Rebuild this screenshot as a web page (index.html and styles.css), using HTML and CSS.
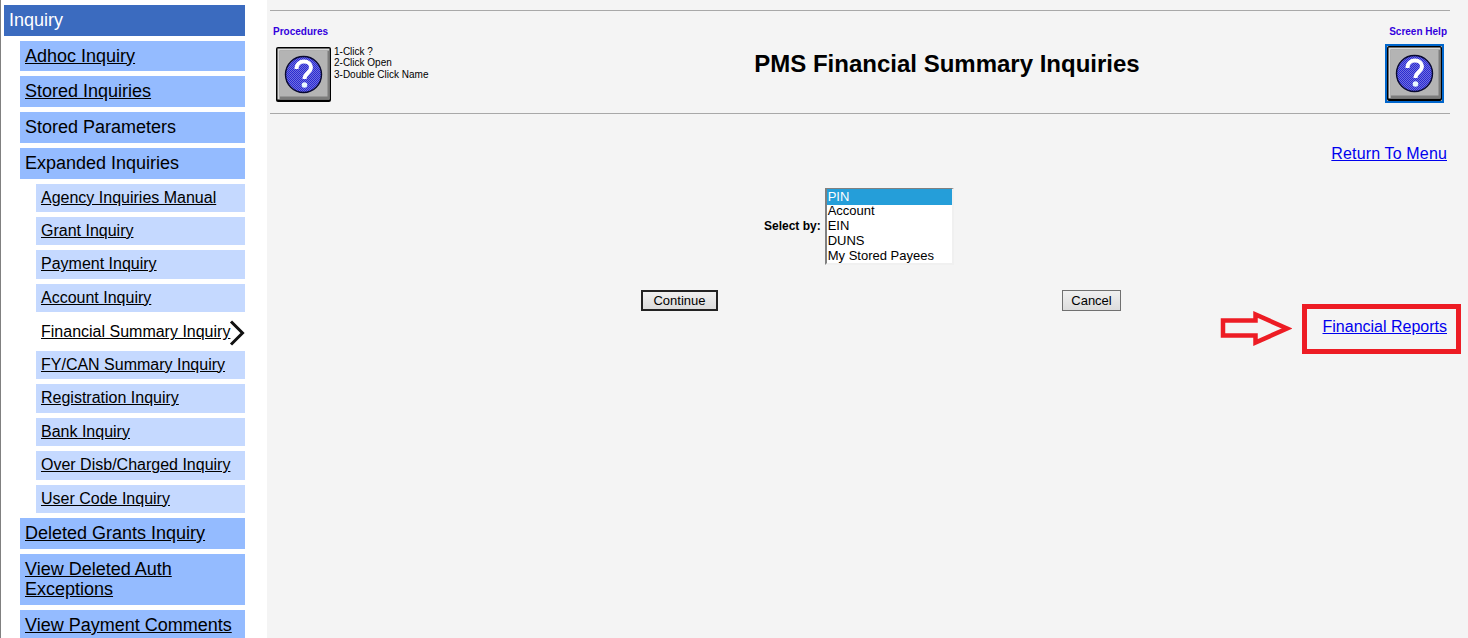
FILE: index.html
```html
<!DOCTYPE html>
<html lang="en">
<head>
<meta charset="utf-8">
<title>PMS Financial Summary Inquiries</title>
<link rel="stylesheet" href="styles.css">
</head>
<body>
<svg class="defs" width="0" height="0" aria-hidden="true">
  <defs>
    <pattern id="dither" width="2" height="2" patternUnits="userSpaceOnUse">
      <rect width="2" height="2" fill="#2a2ad0"/>
      <rect width="1" height="1" fill="#6f6fe0"/>
      <rect x="1" y="1" width="1" height="1" fill="#6f6fe0"/>
    </pattern>
    <symbol id="help" viewBox="0 0 55 55">
      <rect width="55" height="55" rx="2" fill="#000"/>
      <rect x="1.5" y="1.5" width="52" height="51" fill="#d8d8d8"/>
      <rect x="3.5" y="3.5" width="50" height="49" fill="#7c7c7c"/>
      <rect x="3.5" y="3.5" width="48" height="46" fill="#b4b4b4"/>
      <circle cx="27.5" cy="27.5" r="18" fill="url(#dither)" stroke="#0a0a30" stroke-width="1.4"/>
      <path d="M20.5 22C20.5 17 24 14.5 28 14.5C32 14.5 35 17 35 20.5C35 25.5 28.5 26 28.5 32" fill="none" stroke="#fff" stroke-width="4"/>
      <circle cx="28.5" cy="38" r="2.8" fill="#e8f8ff"/>
    </symbol>
  </defs>
</svg>
<div class="page">
  <nav class="side">
    <div class="top">Inquiry</div>
    <a class="m" href="#">Adhoc Inquiry</a>
    <a class="m" href="#">Stored Inquiries</a>
    <div class="m">Stored Parameters</div>
    <div class="m">Expanded Inquiries</div>
    <a class="s" href="#">Agency Inquiries Manual</a>
    <a class="s" href="#">Grant Inquiry</a>
    <a class="s" href="#">Payment Inquiry</a>
    <a class="s" href="#">Account Inquiry</a>
    <div class="s current"><a href="#">Financial Summary Inquiry</a><svg class="chev" width="16" height="26" viewBox="0 0 16 26"><path d="M2 1.5L13.5 13L2 24.5" fill="none" stroke="#111" stroke-width="3"/></svg></div>
    <a class="s" href="#">FY/CAN Summary Inquiry</a>
    <a class="s" href="#">Registration Inquiry</a>
    <a class="s" href="#">Bank Inquiry</a>
    <a class="s" href="#">Over Disb/Charged Inquiry</a>
    <a class="s" href="#">User Code Inquiry</a>
    <a class="m" href="#">Deleted Grants Inquiry</a>
    <a class="m" href="#">View Deleted Auth Exceptions</a>
    <a class="m" href="#">View Payment Comments</a>
  </nav>
  <main class="main">
    <header class="head">
      <div class="proc">
        <div class="tiny">Procedures</div>
        <div class="proc-row">
          <svg class="help" width="55" height="55"><use href="#help"/></svg>
          <div class="steps">1-Click ?<br>2-Click Open<br>3-Double Click Name</div>
        </div>
      </div>
      <h1>PMS Financial Summary Inquiries</h1>
      <div class="shelp">
        <div class="tiny">Screen Help</div>
        <span class="focus"><svg class="help" width="55" height="55"><use href="#help"/></svg></span>
      </div>
    </header>
    <div class="ret"><a href="#">Return To Menu</a></div>
    <div class="sel">
      <label class="sel-label">Select by:</label>
      <ul class="list">
        <li class="on">PIN</li>
        <li>Account</li>
        <li>EIN</li>
        <li>DUNS</li>
        <li>My Stored Payees</li>
      </ul>
    </div>
    <div class="btns">
      <button class="btn def" type="button">Continue</button>
      <button class="btn cancel" type="button">Cancel</button>
    </div>
    <div class="fin"><a href="#">Financial Reports</a></div>
    <div class="redbox"></div>
    <svg class="arrow" width="72" height="35" viewBox="0 0 72 35"><path d="M3 9.5H35.5V3.5L67 17.5L35.5 31.5V24.5H3Z" fill="none" stroke="#ed1c24" stroke-width="4.5"/></svg>
  </main>
</div>
</body>
</html>
```
FILE: styles.css
```css
html, body { margin: 0; padding: 0; height: 100%; overflow: hidden; background: #fff; }
body { font-family: "Liberation Sans", Arial, sans-serif; color: #000; }
.defs { position: absolute; }
.page { display: flex; height: 638px; border-left: 1px solid #808080; }
.side { width: 241px; flex: none; padding: 5px 22px 0 3px; display: flex; flex-direction: column; }
.top, .m, .s { display: block; color: #000; box-sizing: border-box; flex: none; }
.top { background: #3b6bbf; color: #fff; font-size: 18px; line-height: 20.7px; padding: 5px; margin-bottom: 5px; }
.m { background: #94bbff; font-size: 18px; line-height: 20.7px; padding: 5px; margin: 0 0 5px 16px; }
.s { background: #c5d9ff; font-size: 16px; line-height: 18.45px; padding: 5px; margin: 0 0 5px 32px; }
.current { background: #fff; display: flex; align-items: center; height: 33.4px; margin-bottom: 0; padding: 0 0 3px 5px; white-space: nowrap; }
.current a { color: #000; }
.chev { flex: none; margin-left: -1px; }
.main { flex: 1; background: #f4f4f4; position: relative; padding: 0 18px 0 3px; min-width: 0; }
.head { margin-top: 10px; height: 102px; border-top: 1px solid #a8a8a8; border-bottom: 1px solid #a8a8a8; display: flex; }
.proc { width: 320px; padding: 15px 0 0 3px; box-sizing: border-box; flex: none; }
.tiny { color: #3300dd; font-size: 10px; font-weight: bold; line-height: 11px; }
.proc-row { display: flex; margin-top: 10px; margin-left: 3px; }
.help { display: block; flex: none; }
.steps { font-size: 10px; line-height: 11.5px; margin: -1.5px 0 0 3px; white-space: nowrap; }
h1 { flex: 1; margin: 0; text-align: center; font-size: 24px; line-height: 28px; padding: 39px 0 0 0; }
.shelp { width: 146px; flex: none; padding: 15px 3px 0 0; box-sizing: border-box; display: flex; flex-direction: column; align-items: flex-end; }
.focus { display: block; margin: 7px 3px 0 0; border: 2px solid #0066cc; }
.ret { text-align: right; font-size: 16px; line-height: 18px; margin-top: 31px; padding-right: 3px; letter-spacing: 0.15px; }
a { color: #000; }
.ret a, .fin a { color: #0000ee; }
.sel { display: flex; margin: 25px 0 0 494px; }
.sel-label { font-size: 12px; font-weight: bold; margin: 31px 4px 0 0; line-height: 14px; }
.list { list-style: none; margin: 0; padding: 0; width: 129px; height: 77px; box-sizing: border-box; background: #fff; border: 2px solid; border-top-width: 1px; border-color: #808080 #f0f0f0 #f0f0f0 #808080; overflow: hidden; font-size: 13px; line-height: 15px; }
.list li { padding-left: 1px; }
.list .on { background: #259ed9; color: #fff; height: 16px; margin-bottom: -2px; }
.btns { display: flex; margin: 25px 0 0 371px; }
.btn { font: 13px/15px "Liberation Sans", Arial, sans-serif; height: 21px; padding: 0; background: linear-gradient(#f0f0f0, #dcdcdc); color: #000; box-sizing: border-box; }
.def { width: 77px; border: 2px solid #222; }
.cancel { width: 59px; border: 1px solid #707070; margin-left: 344px; }
.fin { text-align: right; font-size: 16px; line-height: 18px; margin-top: 7px; padding-right: 3px; }
.redbox { position: absolute; left: 1035px; top: 304px; width: 159px; height: 50px; box-sizing: border-box; border: 5px solid #ed1c24; }
.arrow { position: absolute; left: 953px; top: 311px; }
```
